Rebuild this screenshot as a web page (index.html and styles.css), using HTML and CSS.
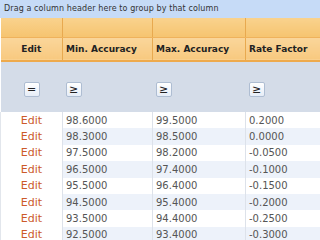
FILE: index.html
```html
<!DOCTYPE html>
<html lang="en">
<head>
  <meta charset="UTF-8" />
  <title>Accuracy Grid</title>
  <link rel="stylesheet" href="styles.css">
</head>
<body>

<div class="grid">
  <div class="group-panel">Drag a column header here to group by that column</div>

  <table class="tabela">
    <colgroup>
      <col class="c-edit">
      <col class="c-min">
      <col class="c-max">
      <col class="c-rate">
    </colgroup>
    <thead>
      <tr class="faixa">
        <th></th><th></th><th></th><th></th>
      </tr>
      <tr class="titulos">
        <th class="centro">Edit</th>
        <th>Min. Accuracy</th>
        <th>Max. Accuracy</th>
        <th>Rate Factor</th>
      </tr>
      <tr class="filtros">
        <td class="centro"><span class="filtro">=</span></td>
        <td><span class="filtro">&ge;</span></td>
        <td><span class="filtro">&ge;</span></td>
        <td><span class="filtro">&ge;</span></td>
      </tr>
    </thead>
    <tbody>
      <tr><td class="editar">Edit</td><td>98.6000</td><td>99.5000</td><td>0.2000</td></tr>
      <tr class="alt"><td class="editar">Edit</td><td>98.3000</td><td>98.5000</td><td>0.0000</td></tr>
      <tr><td class="editar">Edit</td><td>97.5000</td><td>98.2000</td><td>-0.0500</td></tr>
      <tr class="alt"><td class="editar">Edit</td><td>96.5000</td><td>97.4000</td><td>-0.1000</td></tr>
      <tr><td class="editar">Edit</td><td>95.5000</td><td>96.4000</td><td>-0.1500</td></tr>
      <tr class="alt"><td class="editar">Edit</td><td>94.5000</td><td>95.4000</td><td>-0.2000</td></tr>
      <tr><td class="editar">Edit</td><td>93.5000</td><td>94.4000</td><td>-0.2500</td></tr>
      <tr class="alt"><td class="editar">Edit</td><td>92.5000</td><td>93.4000</td><td>-0.3000</td></tr>
    </tbody>
  </table>
</div>

</body>
</html>
```

FILE: styles.css
```css
* {
  box-sizing: border-box;
}

body {
  margin: 0;
  font-family: "DejaVu Sans", Verdana, sans-serif;
  background-color: #ffffff;
  overflow: hidden;
}

.grid {
  width: 320px;
}

.group-panel {
  height: 18px;
  line-height: 18px;
  padding-left: 4px;
  font-size: 8px;
  letter-spacing: 0.1px;
  color: #333;
  background-color: #c6dbf7;
  white-space: nowrap;
}

.tabela {
  width: 320px;
  border-collapse: collapse;
  table-layout: fixed;
}

.c-edit { width: 62px; }
.c-min { width: 90px; }
.c-max { width: 93px; }
.c-rate { width: 75px; }

.tabela th,
.tabela td {
  padding: 0 0 0 3px;
  text-align: left;
  white-space: nowrap;
  overflow: hidden;
}

.tabela .centro {
  text-align: center;
  padding: 0;
}

.faixa th {
  height: 19px;
  background: linear-gradient(#f9d28d, #f6c470);
  border-right: 1px solid #e8a94f;
  border-bottom: 1px solid #efb25c;
}

.titulos th {
  height: 24px;
  font-size: 9px;
  font-weight: bold;
  color: #222;
  background: linear-gradient(#fad69b, #f8c97f);
  border-right: 1px solid #e8a94f;
  border-bottom: 2px solid #eeaa4c;
}

.filtros td {
  height: 51px;
  background-color: #d4dce8;
  vertical-align: middle;
}

.filtro {
  display: inline-block;
  width: 16px;
  height: 15px;
  line-height: 14px;
  text-align: center;
  font-size: 11px;
  color: #222;
  background: linear-gradient(#ffffff, #e6edf7);
  border: 1px solid #aebdd2;
  border-radius: 2px;
}

tbody td {
  height: 16.4px;
  font-size: 10px;
  color: #555;
  border-left: 1px solid #dde2ea;
}

tbody tr.alt td {
  background-color: #edf2fa;
}

tbody td.editar,
tbody tr.alt td.editar {
  text-align: center;
  padding: 0;
  font-size: 11px;
  color: #cc5a2a;
  background-color: #ffffff;
  border-left: 1px solid #e2e6ec;
}
```
